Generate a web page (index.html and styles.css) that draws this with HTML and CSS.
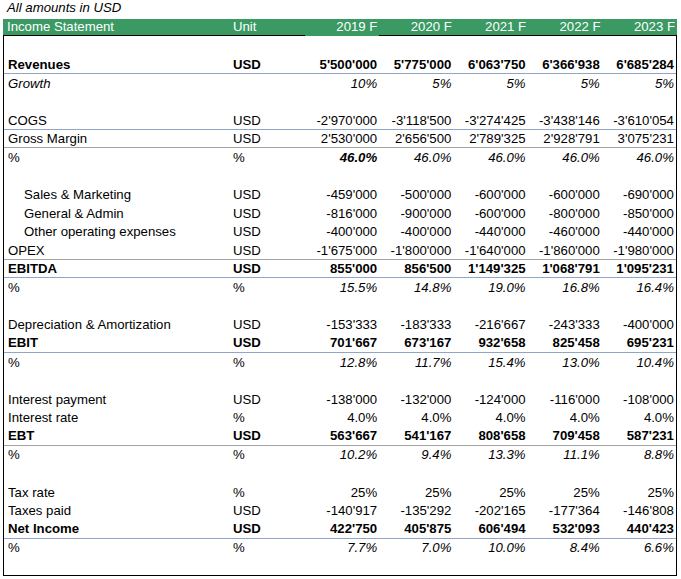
FILE: index.html
```html
<!DOCTYPE html>
<html>
<head>
<meta charset="utf-8">
<link rel="stylesheet" href="styles.css">
</head>
<body>
<div class="sheet">
  <div class="note">All amounts in USD</div>
  <div class="grid">
    <div class="row head">
      <div class="lab">Income Statement</div><div class="unit">Unit</div>
      <div class="num sel">2019 F</div><div class="num">2020 F</div><div class="num">2021 F</div><div class="num">2022 F</div><div class="num">2023 F</div>
    </div>
    <div class="row gap first"></div>

    <div class="row b ul-b"><div class="lab">Revenues</div><div class="unit">USD</div><div class="num">5'500'000</div><div class="num">5'775'000</div><div class="num">6'063'750</div><div class="num">6'366'938</div><div class="num">6'685'284</div></div>
    <div class="row i"><div class="lab">Growth</div><div class="unit"></div><div class="num">10%</div><div class="num">5%</div><div class="num">5%</div><div class="num">5%</div><div class="num">5%</div></div>
    <div class="row"></div>

    <div class="row ul-b"><div class="lab">COGS</div><div class="unit">USD</div><div class="num">-2'970'000</div><div class="num">-3'118'500</div><div class="num">-3'274'425</div><div class="num">-3'438'146</div><div class="num">-3'610'054</div></div>
    <div class="row ul-g"><div class="lab">Gross Margin</div><div class="unit">USD</div><div class="num">2'530'000</div><div class="num">2'656'500</div><div class="num">2'789'325</div><div class="num">2'928'791</div><div class="num">3'075'231</div></div>
    <div class="row pct"><div class="lab">%</div><div class="unit">%</div><div class="num strong">46.0%</div><div class="num">46.0%</div><div class="num">46.0%</div><div class="num">46.0%</div><div class="num">46.0%</div></div>
    <div class="row"></div>

    <div class="row"><div class="lab ind">Sales &amp; Marketing</div><div class="unit">USD</div><div class="num">-459'000</div><div class="num">-500'000</div><div class="num">-600'000</div><div class="num">-600'000</div><div class="num">-690'000</div></div>
    <div class="row"><div class="lab ind">General &amp; Admin</div><div class="unit">USD</div><div class="num">-816'000</div><div class="num">-900'000</div><div class="num">-600'000</div><div class="num">-800'000</div><div class="num">-850'000</div></div>
    <div class="row"><div class="lab ind">Other operating expenses</div><div class="unit">USD</div><div class="num">-400'000</div><div class="num">-400'000</div><div class="num">-440'000</div><div class="num">-460'000</div><div class="num">-440'000</div></div>
    <div class="row ul-g"><div class="lab">OPEX</div><div class="unit">USD</div><div class="num">-1'675'000</div><div class="num">-1'800'000</div><div class="num">-1'640'000</div><div class="num">-1'860'000</div><div class="num">-1'980'000</div></div>
    <div class="row b ul-b"><div class="lab">EBITDA</div><div class="unit">USD</div><div class="num">855'000</div><div class="num">856'500</div><div class="num">1'149'325</div><div class="num">1'068'791</div><div class="num">1'095'231</div></div>
    <div class="row pct"><div class="lab">%</div><div class="unit">%</div><div class="num">15.5%</div><div class="num">14.8%</div><div class="num">19.0%</div><div class="num">16.8%</div><div class="num">16.4%</div></div>
    <div class="row"></div>

    <div class="row"><div class="lab">Depreciation &amp; Amortization</div><div class="unit">USD</div><div class="num">-153'333</div><div class="num">-183'333</div><div class="num">-216'667</div><div class="num">-243'333</div><div class="num">-400'000</div></div>
    <div class="row b ul-b"><div class="lab">EBIT</div><div class="unit">USD</div><div class="num">701'667</div><div class="num">673'167</div><div class="num">932'658</div><div class="num">825'458</div><div class="num">695'231</div></div>
    <div class="row pct"><div class="lab">%</div><div class="unit">%</div><div class="num">12.8%</div><div class="num">11.7%</div><div class="num">15.4%</div><div class="num">13.0%</div><div class="num">10.4%</div></div>
    <div class="row"></div>

    <div class="row"><div class="lab">Interest payment</div><div class="unit">USD</div><div class="num">-138'000</div><div class="num">-132'000</div><div class="num">-124'000</div><div class="num">-116'000</div><div class="num">-108'000</div></div>
    <div class="row"><div class="lab">Interest rate</div><div class="unit">%</div><div class="num">4.0%</div><div class="num">4.0%</div><div class="num">4.0%</div><div class="num">4.0%</div><div class="num">4.0%</div></div>
    <div class="row b ul-g"><div class="lab">EBT</div><div class="unit">USD</div><div class="num">563'667</div><div class="num">541'167</div><div class="num">808'658</div><div class="num">709'458</div><div class="num">587'231</div></div>
    <div class="row pct"><div class="lab">%</div><div class="unit">%</div><div class="num">10.2%</div><div class="num">9.4%</div><div class="num">13.3%</div><div class="num">11.1%</div><div class="num">8.8%</div></div>
    <div class="row"></div>

    <div class="row"><div class="lab">Tax rate</div><div class="unit">%</div><div class="num">25%</div><div class="num">25%</div><div class="num">25%</div><div class="num">25%</div><div class="num">25%</div></div>
    <div class="row"><div class="lab">Taxes paid</div><div class="unit">USD</div><div class="num">-140'917</div><div class="num">-135'292</div><div class="num">-202'165</div><div class="num">-177'364</div><div class="num">-146'808</div></div>
    <div class="row b ul-b"><div class="lab">Net Income</div><div class="unit">USD</div><div class="num">422'750</div><div class="num">405'875</div><div class="num">606'494</div><div class="num">532'093</div><div class="num">440'423</div></div>
    <div class="row pct"><div class="lab">%</div><div class="unit">%</div><div class="num">7.7%</div><div class="num">7.0%</div><div class="num">10.0%</div><div class="num">8.4%</div><div class="num">6.6%</div></div>
    <div class="row last"></div>
  </div>
</div>
</body>
</html>
```
FILE: styles.css
```css
html, body {
  margin: 0;
  padding: 0;
  background: #fff;
}

.sheet {
  padding-left: 3px;
  font-family: "Liberation Sans", Arial, sans-serif;
  font-size: 13.2px;
  color: #000;
}

.note {
  height: 19px;
  line-height: 16px;
  padding-left: 4px;
  font-style: italic;
}

.grid {
  width: 674px;
  box-sizing: border-box;
  border-left: 1px solid #000;
  border-right: 1px solid #000;
  border-bottom: 1px solid #000;
}

.row {
  display: grid;
  grid-template-columns: 226px 75px repeat(5, 74.2px);
  height: 18.58px;
  box-sizing: border-box;
  align-items: center;
  white-space: nowrap;
}

.row > div {
  overflow: visible;
}

.head {
  height: 17px;
  background: #3b9a63;
  color: #fff;
  margin-left: -1px;
  margin-right: -1px;
  grid-template-columns: 227px 75px repeat(5, 74.4px);
  align-items: stretch;
}

.head > div {
  box-sizing: border-box;
  border-bottom: 1px solid #000;
  line-height: 16px;
}

.head > .sel {
  border-bottom-color: #3b9a63;
}

.head .lab {
  padding-left: 4px;
}

.gap.first {
  height: 19.5px;
}

.lab {
  padding-left: 4px;
}

.lab.ind {
  padding-left: 20px;
}

.unit {
  padding-left: 3px;
}

.num {
  text-align: right;
  padding-right: 2px;
}

.b {
  font-weight: bold;
}

.i {
  font-style: italic;
}

.pct .num {
  font-style: italic;
}

.num.strong {
  font-weight: bold;
}

.ul-b {
  border-bottom: 1px solid #8fa6c8;
}

.ul-g {
  border-bottom: 1px solid #a3a3a3;
}

.last {
  height: 18.3px;
}
```
